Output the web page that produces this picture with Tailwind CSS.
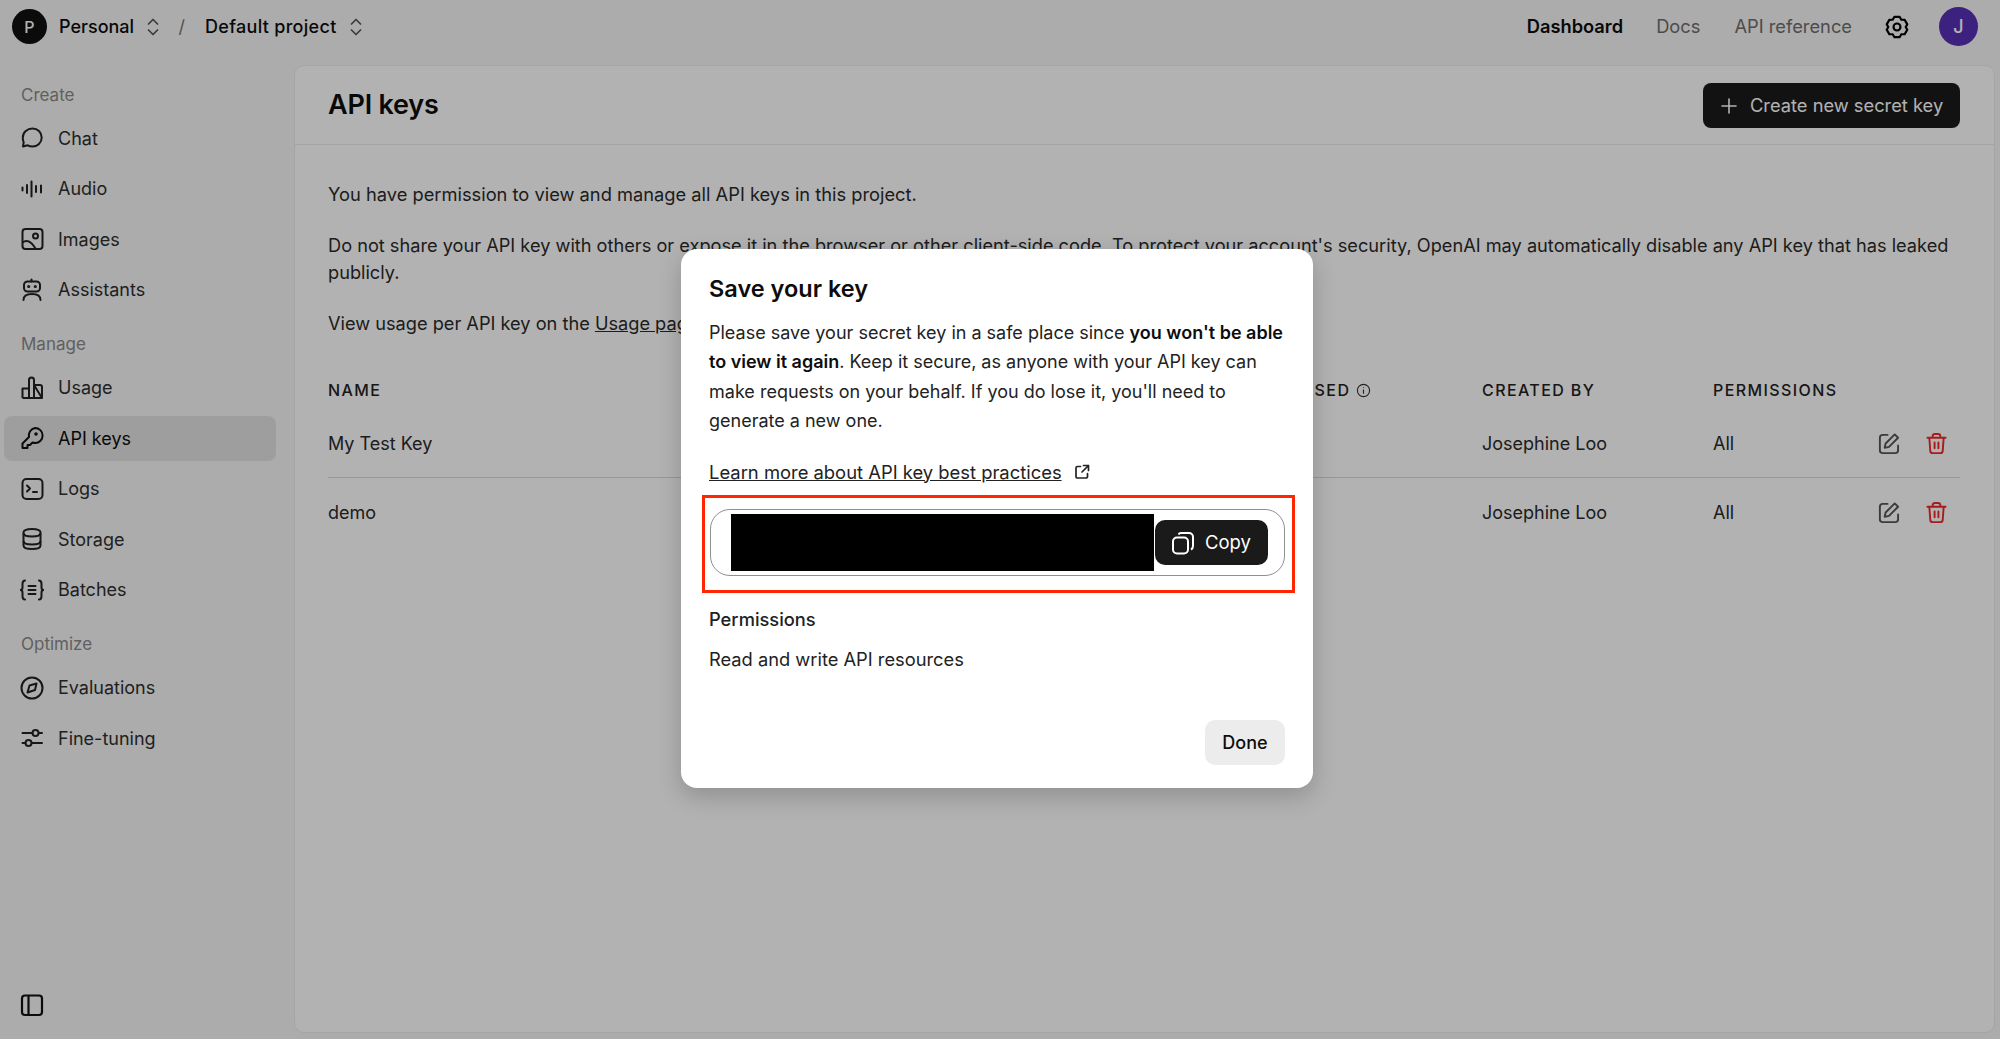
<!DOCTYPE html>
<html lang="en">
<head>
    <meta charset="UTF-8">
    <meta name="viewport" content="width=device-width, initial-scale=1.0">
    <title>API keys</title>
    <script src="https://cdn.jsdelivr.net/npm/@tailwindcss/browser@4"></script>
</head>
<body class="font-['Inter',sans-serif] bg-[#f6f6f6] text-[#0d0d0d] h-[1039px] overflow-hidden relative">

    <!-- Top bar -->
    <header class="h-[52px] pt-[1px] flex items-center justify-between pl-[12px] pr-[22px] text-[18px]">
        <div class="flex items-center">
            <div class="w-[35px] h-[35px] rounded-full bg-[#111] text-white flex items-center justify-center text-[16px] font-medium">P</div>
            <span class="ml-[12px] w-[86px] font-medium">Personal</span>
            <svg class="w-[16px] h-[20px]" viewBox="0 0 16 20" fill="none" stroke="#555" stroke-width="1.7" stroke-linecap="round" stroke-linejoin="round"><path d="M3.5 7 8 2.5 12.5 7M3.5 13 8 17.5 12.5 13"/></svg>
            <span class="ml-[17.5px] w-[26.5px] text-[#777]">/</span>
            <span class="w-[142.5px] font-medium tracking-[0.3px]">Default project</span>
            <svg class="w-[16px] h-[20px]" viewBox="0 0 16 20" fill="none" stroke="#555" stroke-width="1.7" stroke-linecap="round" stroke-linejoin="round"><path d="M3.5 7 8 2.5 12.5 7M3.5 13 8 17.5 12.5 13"/></svg>
        </div>
        <div class="flex items-center text-[18.3px]">
            <span class="font-semibold">Dashboard</span>
            <span class="ml-[33px] text-[#6e6e6e]">Docs</span>
            <span class="ml-[34px] text-[#6e6e6e]">API reference</span>
            <svg class="ml-[31.5px] w-[26px] h-[26px]" viewBox="0 0 24 24" fill="none" stroke="#000" stroke-width="2" stroke-linejoin="round"><path d="M9.6 2.6h4.8l1.6 2.7 3.1.1 2.4 4.2-1.5 2.4 1.5 2.5-2.4 4.1-3.1.1-1.6 2.7H9.6L8 18.7l-3.1-.1-2.4-4.1L4 12 2.5 9.6l2.4-4.2L8 5.3z"/><circle cx="12" cy="12" r="3.2"/></svg>
            <div class="ml-[29.5px] w-[39px] h-[39px] rounded-full bg-[#5730b7] text-white flex items-center justify-center text-[18px] font-medium">J</div>
        </div>
    </header>

    <div class="flex h-[987px]">
        <!-- Sidebar -->
        <aside class="w-[294px] pt-[23.5px] pl-[4px] pr-[18px] relative shrink-0 text-[18px] text-[#2f2f2f]">
            <div class="pl-[17px] h-[40px] flex items-center text-[17px] text-[#8a8a8a]">Create</div>
            <nav class="flex flex-col gap-[5.5px]">
                <a class="h-[45px] flex items-center gap-[14px] pl-[16px]">
                    <svg class="w-[24px] h-[24px] shrink-0" viewBox="0 0 24 24" fill="none" stroke="#222" stroke-width="2" stroke-linejoin="round"><path d="M12.5 2.500c5 0 9.200 3.800 9.200 9s-4.200 9-9.200 9c-2 0-3.400-.4-4.800-1.200L3 20.500l.7-4.300A9 9 0 0 1 2.800 11.500c0-5.200 4.600-9 9.700-9z"/></svg>
                    <span>Chat</span>
                </a>
                <a class="h-[45px] flex items-center gap-[14px] pl-[16px]">
                    <svg class="w-[24px] h-[24px] shrink-0" viewBox="0 0 24 24" fill="none" stroke="#222" stroke-width="2" stroke-linecap="round"><path d="M2.500 10.500v3M7 8v8M11.500 4.500v15M16 9v6M21 8.500v7"/></svg>
                    <span>Audio</span>
                </a>
                <a class="h-[45px] flex items-center gap-[14px] pl-[16px]">
                    <svg class="w-[24px] h-[24px] shrink-0" viewBox="0 0 24 24" fill="none" stroke="#222" stroke-width="2" stroke-linejoin="round"><rect x="2.500" y="2" width="20" height="20" rx="3"/><circle cx="15.500" cy="9" r="2.500"/><path d="M2.500 15.500c4-3 8-2 13 6"/></svg>
                    <span>Images</span>
                </a>
                <a class="h-[45px] flex items-center gap-[14px] pl-[16px]">
                    <svg class="w-[24px] h-[24px] shrink-0" viewBox="0 0 24 24" fill="none" stroke="#222" stroke-width="2" stroke-linecap="round" stroke-linejoin="round"><path d="M11.500 1.500v2"/><rect x="4" y="3.500" width="16" height="10" rx="3.500"/><path d="M3.500 22c0-4 3.500-6 8.500-6s8.500 2 8.500 6"/><circle cx="8.700" cy="8.500" r=".6" fill="#222"/><circle cx="15.300" cy="8.500" r=".6" fill="#222"/></svg>
                    <span>Assistants</span>
                </a>
            </nav>
            <div class="pl-[17px] h-[40px] mt-[13px] flex items-center text-[17px] text-[#8a8a8a]">Manage</div>
            <nav class="flex flex-col gap-[5.5px]">
                <a class="h-[45px] flex items-center gap-[14px] pl-[16px]">
                    <svg class="w-[24px] h-[24px] shrink-0" viewBox="0 0 24 24" fill="none" stroke="#222" stroke-width="2" stroke-linejoin="round"><path d="M2.500 22v-9.500h6.500M9 22V4a2.500 2.500 0 0 1 5 0v18M14 9h6a2 2 0 0 1 2 2v11zM2.500 22h19.500"/></svg>
                    <span>Usage</span>
                </a>
                <a class="h-[45px] flex items-center gap-[14px] pl-[16px] rounded-[8px] bg-[#e3e3e3] text-[#0d0d0d]">
                    <svg class="w-[24px] h-[24px] shrink-0" viewBox="0 0 24 24" fill="none" stroke="#111" stroke-width="2" stroke-linejoin="round"><path d="M15 2a7.500 7.500 0 0 1 .2 15c-1 0-2-.2-2.700-.5L10 19H7.500v3H2.500v-4.500l6.500-6.500A7.500 7.500 0 0 1 15 2z"/><circle cx="16" cy="8" r=".8" fill="#111"/></svg>
                    <span>API keys</span>
                </a>
                <a class="h-[45px] flex items-center gap-[14px] pl-[16px]">
                    <svg class="w-[24px] h-[24px] shrink-0" viewBox="0 0 24 24" fill="none" stroke="#222" stroke-width="2" stroke-linecap="round" stroke-linejoin="round"><rect x="2.500" y="2" width="20" height="20" rx="4"/><path d="M7 8.500 10 11.500 7 14.500M13 15h4"/></svg>
                    <span>Logs</span>
                </a>
                <a class="h-[45px] flex items-center gap-[14px] pl-[16px]">
                    <svg class="w-[24px] h-[24px] shrink-0" viewBox="0 0 24 24" fill="none" stroke="#222" stroke-width="2"><path d="M3.500 5.500c0-2.500 4-3.500 8.500-3.500s8.500 1 8.500 3.500v13c0 2.500-4 3.500-8.500 3.500s-8.500-1-8.500-3.500z"/><path d="M3.500 6c0 2.500 4 3.500 8.500 3.500s8.500-1 8.500-3.500M3.500 14c0 2.500 4 3.500 8.500 3.500s8.500-1 8.500-3.500"/></svg>
                    <span>Storage</span>
                </a>
                <a class="h-[45px] flex items-center gap-[14px] pl-[16px]">
                    <svg class="w-[24px] h-[24px] shrink-0" viewBox="0 0 24 24" fill="none" stroke="#222" stroke-width="2" stroke-linecap="round" stroke-linejoin="round"><path d="M5 2.500c-2.500 0-2.500 1.500-2.500 3.500v3.500C2.500 11 1.500 12 .5 12c1 0 2 1 2 2.500V18c0 2 0 3.500 2.500 3.500M19 2.500c2.500 0 2.500 1.500 2.500 3.500v3.500c0 1.500 1 2.500 2 2.500-1 0-2 1-2 2.500V18c0 2 0 3.500-2.500 3.500M8.500 8h7M8.500 12h7M8.500 16h7"/></svg>
                    <span>Batches</span>
                </a>
            </nav>
            <div class="pl-[17px] h-[40px] mt-[13px] flex items-center text-[17px] text-[#8a8a8a]">Optimize</div>
            <nav class="flex flex-col gap-[5.5px]">
                <a class="h-[45px] flex items-center gap-[14px] pl-[16px]">
                    <svg class="w-[24px] h-[24px] shrink-0" viewBox="0 0 24 24" fill="none" stroke="#222" stroke-width="2" stroke-linejoin="round"><circle cx="12" cy="12" r="10.500"/><path d="M16.500 7.500 15 14l-7.500 2.500L9.500 9.500z"/></svg>
                    <span>Evaluations</span>
                </a>
                <a class="h-[45px] flex items-center gap-[14px] pl-[16px]">
                    <svg class="w-[24px] h-[24px] shrink-0" viewBox="0 0 24 24" fill="none" stroke="#222" stroke-width="2" stroke-linecap="round"><path d="M2.500 7h10M19 7h3M2.500 17h3M12 17h10"/><circle cx="15.500" cy="7" r="3"/><circle cx="8.500" cy="17" r="3"/></svg>
                    <span>Fine-tuning</span>
                </a>
            </nav>
            <svg class="absolute left-[20px] bottom-[22px] w-[24px] h-[24px]" viewBox="0 0 24 24" fill="none" stroke="#111" stroke-width="2.200"><rect x="2" y="2.500" width="20" height="19.500" rx="3"/><path d="M8.500 2.500v19.500"/></svg>
        </aside>

        <!-- Main card -->
        <main class="w-[1701px] h-[968px] mt-[13px] bg-white rounded-[10px] border border-[#ececec] shrink-0">
            <div class="h-[79px] pl-[33px] pr-[34px] pt-[1px] flex items-center justify-between border-b border-[#ececec]">
                <h1 class="text-[27px] font-semibold tracking-[-0.2px]">API keys</h1>
                <button class="h-[45px] w-[257px] rounded-[8px] bg-[#1a1a1a] text-white flex items-center pl-[16px] text-[18.3px]">
                    <svg class="w-[20px] h-[20px] mr-[11px]" viewBox="0 0 20 20" fill="none" stroke="#fff" stroke-width="1.600" stroke-linecap="round"><path d="M10 3v14M3 10h14"/></svg>
                    Create new secret key
                </button>
            </div>
            <div class="pl-[33px] pr-[34px] pt-[35.5px] text-[18px] leading-[27px] text-[#2a2a2a]">
                <p class="text-[18.3px]">You have permission to view and manage all API keys in this project.</p>
                <p class="mt-[24px] text-[18.2px]">Do not share your API key with others or expose it in the browser or other client-side code. To protect your account's security, OpenAI may automatically disable any API key that has leaked publicly.</p>
                <p class="mt-[24px] text-[18.2px]">View usage per API key on the <span class="underline">Usage page</span>.</p>

                <div class="mt-[38.5px] grid grid-cols-[921px_233px_231px_1fr] items-center h-[30px] text-[16px] font-medium tracking-[1.4px] text-[#222]">
                    <span>NAME</span>
                    <span class="flex items-center gap-[6px]">LAST USED
                        <svg class="w-[15px] h-[15px]" viewBox="0 0 16 16" fill="none" stroke="#333" stroke-width="1.200"><circle cx="8" cy="8" r="6.500"/><path d="M8 7v4.500M8 4.500v.8"/></svg>
                    </span>
                    <span>CREATED BY</span>
                    <span>PERMISSIONS</span>
                </div>
                <div class="mt-[5px] grid grid-cols-[921px_233px_231px_1fr] items-center h-[68px] border-b border-[#d9d9d9]">
                    <span>My Test Key</span>
                    <span></span>
                    <span>Josephine Loo</span>
                    <div class="flex items-center justify-between pr-[12px]">
                        <span>All</span>
                        <div class="flex items-center gap-[25px]">
                            <svg class="w-[23px] h-[23px]" viewBox="0 0 24 24" fill="none" stroke="#555" stroke-width="2" stroke-linecap="round" stroke-linejoin="round"><path d="M11 3H6a3 3 0 0 0-3 3v13a3 3 0 0 0 3 3h13a3 3 0 0 0 3-3v-5"/><path d="M18.500 2.500 22 6l-9.500 9.500-4.500 1 1-4.500z"/></svg>
                            <svg class="w-[23px] h-[23px]" viewBox="0 0 24 24" fill="none" stroke="#ef2a2a" stroke-width="2" stroke-linecap="round" stroke-linejoin="round"><path d="M2.500 6h19M8 6V4.500A2.500 2.500 0 0 1 10.500 2h3A2.500 2.500 0 0 1 16 4.500V6M4.500 6l1 13.500A2.500 2.500 0 0 0 8 22h8a2.500 2.500 0 0 0 2.500-2.500L19.500 6M10 11v6M14 11v6"/></svg>
                        </div>
                    </div>
                </div>
                <div class="grid grid-cols-[921px_233px_231px_1fr] items-center h-[69px]">
                    <span>demo</span>
                    <span></span>
                    <span>Josephine Loo</span>
                    <div class="flex items-center justify-between pr-[12px]">
                        <span>All</span>
                        <div class="flex items-center gap-[25px]">
                            <svg class="w-[23px] h-[23px]" viewBox="0 0 24 24" fill="none" stroke="#555" stroke-width="2" stroke-linecap="round" stroke-linejoin="round"><path d="M11 3H6a3 3 0 0 0-3 3v13a3 3 0 0 0 3 3h13a3 3 0 0 0 3-3v-5"/><path d="M18.500 2.500 22 6l-9.500 9.500-4.500 1 1-4.500z"/></svg>
                            <svg class="w-[23px] h-[23px]" viewBox="0 0 24 24" fill="none" stroke="#ef2a2a" stroke-width="2" stroke-linecap="round" stroke-linejoin="round"><path d="M2.500 6h19M8 6V4.500A2.500 2.500 0 0 1 10.500 2h3A2.500 2.500 0 0 1 16 4.500V6M4.500 6l1 13.500A2.500 2.500 0 0 0 8 22h8a2.500 2.500 0 0 0 2.500-2.500L19.500 6M10 11v6M14 11v6"/></svg>
                        </div>
                    </div>
                </div>
            </div>
        </main>
    </div>

    <!-- Dimmed overlay + modal -->
    <div class="absolute inset-0 bg-black/30 flex items-center justify-center pr-[7px]">
        <div class="w-[632px] h-[539px] mt-[-3px] bg-white rounded-[16px] shadow-[0_8px_24px_rgba(0,0,0,0.2)] pl-[28.5px] pr-[27.5px] pt-[24px] text-[18px] text-[#0d0d0d] flex flex-col">
            <h2 class="text-[23.5px] leading-[32px] font-semibold">Save your key</h2>
            <p class="mt-[13px] leading-[29.500px] text-[#222]">Please save your secret key in a safe place since <b class="font-semibold text-[#0d0d0d]">you won't be able to view it again</b>. Keep it secure, as anyone with your API key can make requests on your behalf. If you do lose it, you'll need to generate a new one.</p>
            <div class="mt-[23px] flex items-center gap-[12px] leading-[27px] text-[#222]">
                <span class="underline text-[18.4px]">Learn more about API key best practices</span>
                <svg class="w-[16px] h-[16px]" viewBox="0 0 16 16" fill="none" stroke="#222" stroke-width="1.700" stroke-linecap="round" stroke-linejoin="round"><path d="M6.500 2.500H3.500a1.500 1.500 0 0 0-1.500 1.500v8.500A1.500 1.500 0 0 0 3.500 14H12a1.500 1.500 0 0 0 1.500-1.500V9.500M9.500 1.500h5v5M14.500 1.500 8 8"/></svg>
            </div>
            <div class="mt-[9px] ml-[-7.5px] mr-[-9.5px] h-[98px] border-[3px] border-[#ff2600] pl-[5px] pr-[8px] pt-[11px]">
                <div class="h-[67px] w-[575px] rounded-[20px] border border-[#8f8f8f] flex items-center pl-[20px] pr-[16px]">
                    <div class="w-[423px] h-[57px] bg-black shrink-0"></div>
                    <button class="ml-[1px] w-[114px] h-[45px] rounded-[10px] bg-[#1a1a1a] text-white flex items-center justify-center gap-[10px] mt-[1px] text-[18.5px]">
                        <svg class="w-[24px] h-[24px]" viewBox="0 0 24 24" fill="none" stroke="#fff" stroke-width="2" stroke-linejoin="round"><rect x="2" y="6.500" width="15" height="16" rx="4"/><path d="M7.500 3.500C8 2.500 9 2 10 2h8a4 4 0 0 1 4 4v9c0 1.500-1 3-2 3.500"/></svg>
                        Copy
                    </button>
                </div>
            </div>
            <h3 class="mt-[13px] leading-[27px] font-medium text-[#222] text-[18.3px]">Permissions</h3>
            <p class="mt-[13px] leading-[27px] text-[#222] text-[18.3px]">Read and write API resources</p>
            <div class="mt-[47px] flex justify-end">
                <button class="w-[80px] h-[45px] rounded-[10px] bg-[#ececec] font-medium">Done</button>
            </div>
        </div>
    </div>
</body>
</html>
